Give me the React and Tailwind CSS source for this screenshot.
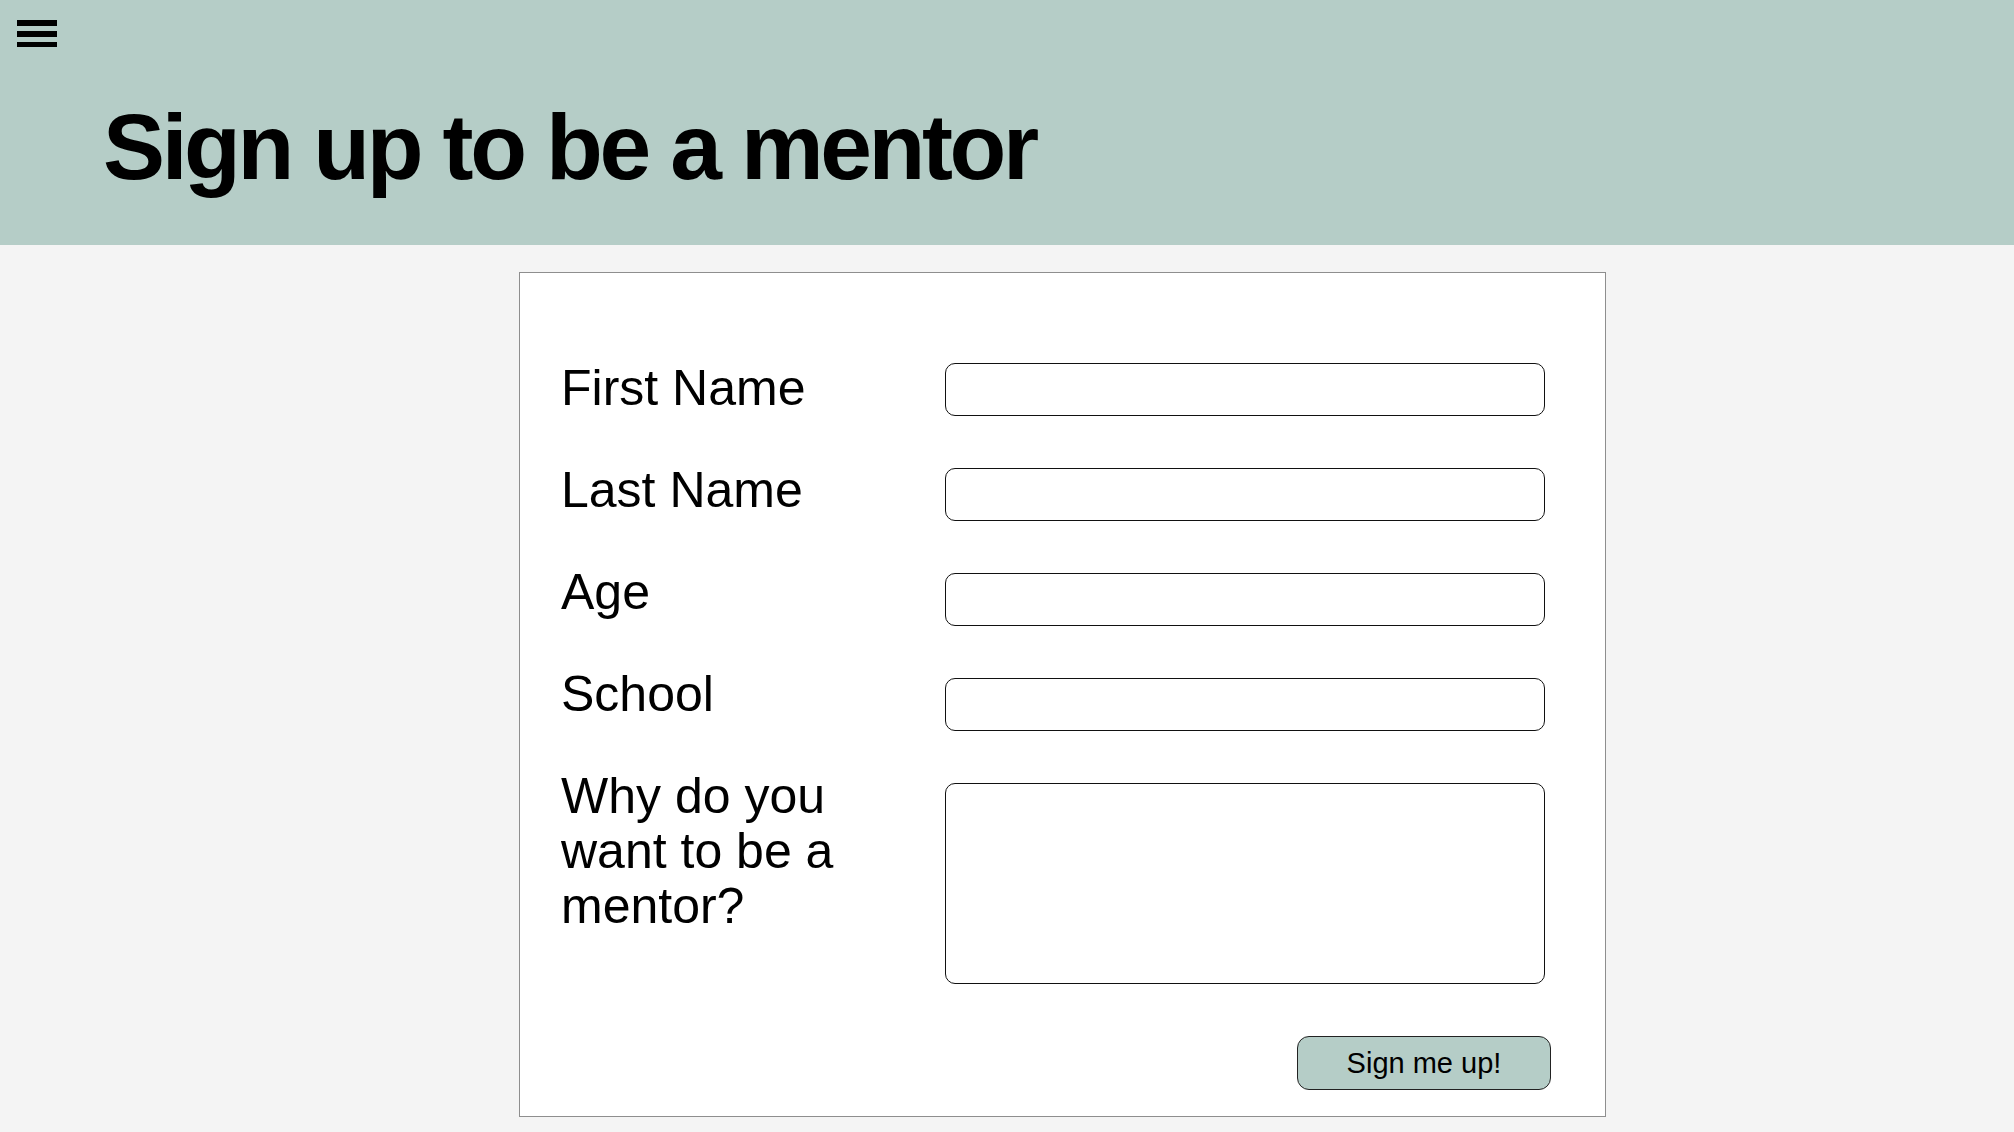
const fields = [
  { id: 'firstName', label: 'First Name' },
  { id: 'lastName', label: 'Last Name' },
  { id: 'age', label: 'Age' },
  { id: 'school', label: 'School' },
]

function MenuIcon() {
  return (
    <button type="button" aria-label="Open menu" className="flex w-[40px] flex-col gap-[5px]">
      <span className="block h-[6px] w-full bg-black" />
      <span className="block h-[6px] w-full bg-black" />
      <span className="block h-[5px] w-full bg-black" />
    </button>
  )
}

function Header() {
  return (
    <header className="h-[245px] bg-[#b5cdc7] pl-[17px] pt-[20px]">
      <MenuIcon />
      <h1 className="ml-[86px] mt-[54px] text-[93px] font-bold leading-none tracking-[-3.4px] text-black">
        Sign up to be a mentor
      </h1>
    </header>
  )
}

function SignupForm() {
  return (
    <form
      className="ml-[519px] mt-[27px] w-[1087px] border border-[#8e8e8e] bg-white"
      onSubmit={(e) => e.preventDefault()}
    >
      <div className="flex pl-[41px]">
        {/* labels */}
        <div className="flex w-[384px] flex-col gap-[47px] pt-[88px]">
          {fields.map((f) => (
            <label key={f.id} htmlFor={f.id} className="w-[300px] text-[50px] leading-[55px]">
              {f.label}
            </label>
          ))}
          <label htmlFor="reason" className="w-[300px] text-[50px] leading-[55px]">
            Why do you want to be a mentor?
          </label>
        </div>

        {/* inputs */}
        <div className="flex w-[600px] flex-col gap-[52px] pt-[90px]">
          {fields.map((f) => (
            <input
              key={f.id}
              id={f.id}
              type="text"
              className="h-[53px] w-full rounded-[10px] border border-[#111] bg-white px-3 text-[24px] outline-none"
            />
          ))}
          <textarea
            id="reason"
            className="h-[201px] w-full resize-none rounded-[10px] border border-[#111] bg-white p-3 text-[24px] outline-none"
          />
        </div>
      </div>

      <div className="mt-[52px] flex justify-end pb-[26px] pr-[54px]">
        <button
          type="submit"
          className="h-[54px] w-[254px] rounded-[12px] border border-[#222] bg-[#b5cdc7] pt-[2px] text-[29px] text-black"
        >
          Sign me up!
        </button>
      </div>
    </form>
  )
}

export default function App() {
  return (
    <div className="min-h-screen bg-[#f4f4f4] font-['Liberation_Sans',Arial,sans-serif] text-black">
      <Header />
      <main className="pb-[15px]">
        <SignupForm />
      </main>
    </div>
  )
}
